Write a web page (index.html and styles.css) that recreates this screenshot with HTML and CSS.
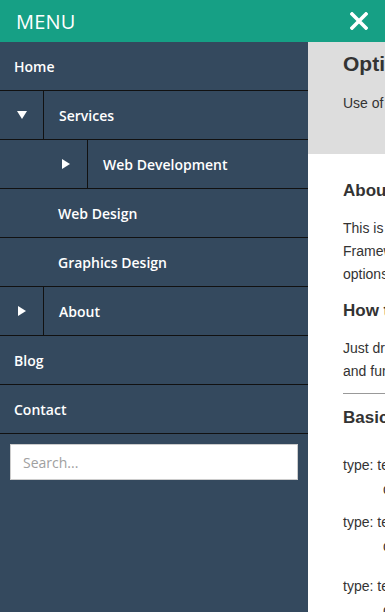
FILE: index.html
```html
<!DOCTYPE html>
<html lang="en">
<head>
    <meta charset="UTF-8">
    <meta name="viewport" content="width=device-width, initial-scale=1.0">
    <title>Menu</title>
    <link rel="stylesheet" href="styles.css">
</head>
<body>
    <header class="topbar">
        <span class="topbar-title">MENU</span>
        <a href="#" class="close-btn" aria-label="Close">
            <svg width="18" height="18" viewBox="0 0 18 18"><path d="M2 2 L16 16 M16 2 L2 16" stroke="#fff" stroke-width="3.6" stroke-linecap="square"/></svg>
        </a>
    </header>

    <div class="page">
        <nav class="side-menu">
            <ul class="menu-list">
                <li><a href="#" class="menu-link">Home</a></li>
                <li>
                    <div class="menu-row">
                        <span class="toggle">
                            <svg width="10" height="8" viewBox="0 0 10 8"><path d="M0 0 H10 L5 8 Z" fill="#fff"/></svg>
                        </span>
                        <a href="#" class="menu-link">Services</a>
                    </div>
                    <ul class="menu-list">
                        <li>
                            <div class="menu-row">
                                <span class="toggle toggle-deep">
                                    <svg width="8" height="10" viewBox="0 0 8 10"><path d="M0 0 L8 5 L0 10 Z" fill="#fff"/></svg>
                                </span>
                                <a href="#" class="menu-link">Web Development</a>
                            </div>
                        </li>
                        <li><a href="#" class="menu-link sub-link">Web Design</a></li>
                        <li><a href="#" class="menu-link sub-link">Graphics Design</a></li>
                    </ul>
                </li>
                <li>
                    <div class="menu-row">
                        <span class="toggle">
                            <svg width="8" height="10" viewBox="0 0 8 10"><path d="M0 0 L8 5 L0 10 Z" fill="#fff"/></svg>
                        </span>
                        <a href="#" class="menu-link">About</a>
                    </div>
                </li>
                <li><a href="#" class="menu-link">Blog</a></li>
                <li><a href="#" class="menu-link">Contact</a></li>
            </ul>
            <div class="search-box">
                <input type="text" placeholder="Search...">
            </div>
        </nav>

        <main class="content">
            <section class="intro">
                <h1>Options</h1>
                <p>Use of the options below to customize the menu.</p>
            </section>
            <section class="docs">
                <h2>About</h2>
                <p>This is a simple multi level push menu built with the<br>Framework, it comes with a number of configuration<br>options you can use.</p>
                <h2>How to use</h2>
                <p>Just drop the markup in your page, include the files<br>and fun is ready to go.</p>
                <hr>
                <h2>Basic options</h2>
                <div class="option">
                    <div>type: text - the kind of menu to build</div>
                    <div class="option-desc">default value is overlap</div>
                </div>
                <div class="option">
                    <div>type: text - the side the menu opens from</div>
                    <div class="option-desc">default value is left</div>
                </div>
                <div class="option">
                    <div>type: text - the label of the back link</div>
                    <div class="option-desc">default value is Back</div>
                </div>
            </section>
        </main>
    </div>
</body>
</html>
```

FILE: styles.css
```css
body {
    margin: 0;
    font-family: "Open Sans", sans-serif;
    background-color: #fff;
    overflow: hidden;
    height: 612px;
}

.topbar {
    height: 42px;
    background-color: #16a085;
    display: flex;
    align-items: center;
    justify-content: space-between;
    padding: 0 17px 0 16px;
}

.topbar-title {
    color: #fff;
    font-size: 20px;
    letter-spacing: 0.2px;
}

.close-btn {
    display: flex;
}

.page {
    display: flex;
    height: 570px;
}

.side-menu {
    flex: none;
    width: 308px;
    background-color: #34495e;
}

.menu-list {
    list-style: none;
    margin: 0;
    padding: 0;
}

.menu-list li {
    border-bottom: 1px solid #111;
}

.menu-list .menu-list {
    border-top: 1px solid #111;
}

.menu-list .menu-list li:last-child {
    border-bottom: none;
}

.menu-row {
    display: flex;
}

.menu-link {
    display: block;
    flex: 1;
    height: 48px;
    box-sizing: border-box;
    padding-top: 2px;
    line-height: 46px;
    padding-left: 14px;
    color: #fff;
    font-size: 14px;
    font-weight: 600;
    text-decoration: none;
}

.menu-row .menu-link {
    padding-left: 15px;
}

.sub-link {
    padding-left: 58px;
}

.toggle {
    flex: none;
    width: 44px;
    display: flex;
    align-items: center;
    justify-content: center;
    border-right: 1px solid #111;
    box-sizing: border-box;
}

.toggle svg {
    margin-left: 1px;
}

.toggle-deep {
    width: 88px;
    padding-left: 44px;
}

.search-box {
    padding: 10px;
}

.search-box input {
    display: block;
    width: 100%;
    height: 36px;
    box-sizing: border-box;
    border: 1px solid #ccc;
    padding: 0 12px;
    font-family: "Open Sans", sans-serif;
    font-size: 14px;
    color: #333;
    outline: none;
}

.search-box input::placeholder {
    color: #a0a0a0;
}

.content {
    flex: none;
    width: 600px;
    font-family: "Liberation Sans", Arial, sans-serif;
    color: #333;
}

.intro {
    background-color: #ddd;
    height: 112px;
    padding: 0 35px;
    box-sizing: border-box;
}

.intro h1 {
    margin: 0;
    padding-top: 8px;
    font-size: 21px;
    line-height: 28px;
}

.intro p {
    margin: 15px 0 0;
    font-size: 14px;
    line-height: 20px;
}

.docs {
    padding: 24px 35px 0;
}

.docs h2 {
    margin: 0;
    font-size: 17px;
    line-height: 26px;
}

.docs p {
    margin: 13px 0 12px;
    font-size: 14px;
    line-height: 23px;
}

.docs hr {
    border: none;
    border-top: 1px solid #999;
    margin: -2px 0 11px;
}

.docs h2 + .option {
    margin-top: 22px;
}

.option {
    font-size: 14px;
    line-height: 24px;
    margin-bottom: 9px;
}

.option + .option + .option {
    margin-top: 16px;
}

.option-desc {
    padding-left: 40px;
}
```
